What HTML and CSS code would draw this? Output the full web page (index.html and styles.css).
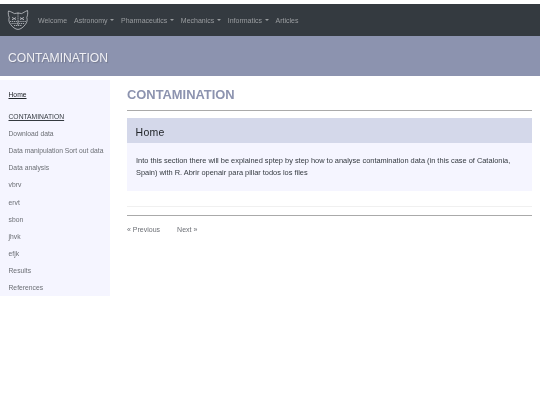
FILE: index.html
```html
<!DOCTYPE html>
<html lang="en">

<head>
    <meta charset="UTF-8">
    <title>CONTAMINATION</title>
    <link rel="stylesheet" href="styles.css">
</head>

<body>
    <nav class="navbar">
        <svg class="navbar-logo" viewBox="0 0 22 20" fill="none" stroke="#c4c7cb" stroke-width="0.8">
            <path d="M1.5 1 C4 1.5 6 3 7.5 3.6 C9.5 3 12.5 3 14.5 3.6 C16 3 18 1.5 20.5 .5 C21 3 20.6 5.5 19.8 7.5 C20.6 10 20 12.5 18.4 14.4 C16.6 17 13.6 19.4 11 19.4 C8.4 19.4 5.4 17 3.6 14.4 C2 12.5 1.4 10 2.2 7.5 C1.4 5.5 1 3 1.5 1 Z" />
            <path d="M5 7.4 L9 9.6 M5 9.8 L9 7.6 M13 7.6 L17 9.8 M13 9.6 L17 7.4" />
            <path d="M11 2.5 V16 M3 11.5 H19 M4.5 13.5 H17.5 M7 15.5 H15" stroke-dasharray="1.2 .7" />
        </svg>
        <a class="navbar-link" href="#">Welcome</a>
        <a class="navbar-link navbar-drop" href="#">Astronomy</a>
        <a class="navbar-link navbar-drop" href="#">Pharmaceutics</a>
        <a class="navbar-link navbar-drop" href="#">Mechanics</a>
        <a class="navbar-link navbar-drop" href="#">Informatics</a>
        <a class="navbar-link" href="#">Articles</a>
    </nav>
    <header class="banner">CONTAMINATION</header>
    <div class="page">
        <aside class="sidebar">
            <a class="sidebar-home" href="#">Home</a>
            <a class="sidebar-item sidebar-current" href="#">CONTAMINATION</a>
            <a class="sidebar-item" href="#">Download data</a>
            <a class="sidebar-item" href="#">Data manipulation Sort out data</a>
            <a class="sidebar-item" href="#">Data analysis</a>
            <a class="sidebar-item" href="#">vbrv</a>
            <a class="sidebar-item" href="#">ervt</a>
            <a class="sidebar-item" href="#">sbon</a>
            <a class="sidebar-item" href="#">jhvk</a>
            <a class="sidebar-item" href="#">efjk</a>
            <a class="sidebar-item" href="#">Results</a>
            <a class="sidebar-item" href="#">References</a>
        </aside>
        <main class="content">
            <h1 class="content-title">CONTAMINATION</h1>
            <hr class="rule rule-title">
            <section class="card">
                <h2 class="card-title">Home</h2>
                <p class="card-text">Into this section there will be explained sptep by step how to analyse contamination data (in this case of Catalonia, Spain) with R. Abrir openair para pillar todos los files</p>
            </section>
            <hr class="rule-light">
            <hr class="rule rule-pager">
            <div class="pager">
                <a href="#">« Previous</a>
                <a href="#">Next »</a>
            </div>
        </main>
    </div>
</body>

</html>
```

FILE: styles.css
```css
* {
    margin: 0;
    padding: 0;
    box-sizing: border-box;
}

body {
    font-family: "Liberation Sans", Arial, sans-serif;
    font-size: 7.42px;
    color: #343a40;
    background: #fff;
    padding-top: 4px;
    min-height: 405px;
    will-change: opacity;
}

a {
    color: inherit;
    text-decoration: none;
}

.navbar {
    height: 32px;
    background: #343a40;
    display: flex;
    align-items: center;
    padding: 0 7px;
}

.navbar-logo {
    width: 22px;
    height: 20px;
    margin-right: 9px;
}

.navbar-link {
    color: #9a9da0;
    font-size: 7px;
    margin-right: 7px;
}

.navbar-drop::after {
    content: "";
    display: inline-block;
    margin-left: 2.5px;
    vertical-align: 1.5px;
    border-top: 2.5px solid;
    border-left: 2px solid transparent;
    border-right: 2px solid transparent;
}

.banner {
    height: 40px;
    background: #8c93af;
    color: #f0f0f5;
    font-size: 12.15px;
    line-height: 44px;
    padding-left: 8px;
    text-shadow: 1px 1px 1px #767b90;
}

.page {
    display: flex;
    padding-top: 4px;
}

.sidebar {
    width: 110px;
    height: 216px;
    background: #f5f5ff;
    flex-shrink: 0;
    padding: 6px 0 0 8.5px;
    font-size: 6.75px;
}

.sidebar a {
    display: block;
    line-height: 17.1px;
    white-space: nowrap;
}

.sidebar .sidebar-home {
    margin-bottom: 5px;
    color: #212529;
    text-decoration: underline;
}

.sidebar-item {
    color: #6c6f75;
}

.sidebar .sidebar-current {
    color: #343a40;
    text-decoration: underline;
}

.content {
    flex: 1;
    padding: 6px 8px 0 17px;
}

.content-title {
    font-size: 12.9px;
    font-weight: bold;
    line-height: 17px;
    color: #8c93af;
}

.rule {
    border: 0;
    border-top: 1px solid #aaa;
}

.rule-title {
    margin-top: 7px;
}

.card {
    margin-top: 7px;
    height: 73px;
    background: #f5f5ff;
}

.card-title {
    height: 25px;
    background: #d4d8ea;
    font-size: 10.5px;
    font-weight: normal;
    line-height: 28px;
    padding-left: 8.5px;
    letter-spacing: 0.3px;
    color: #212529;
}

.card-text {
    padding: 12px 9px 0;
    line-height: 11.5px;
}

.rule-light {
    border: 0;
    border-top: 1px solid #f0f0f0;
    margin-top: 15px;
}

.rule-pager {
    margin-top: 8px;
}

.pager {
    display: flex;
    gap: 17px;
    margin-top: 10px;
    font-size: 7px;
    color: #6c6f75;
}
```
